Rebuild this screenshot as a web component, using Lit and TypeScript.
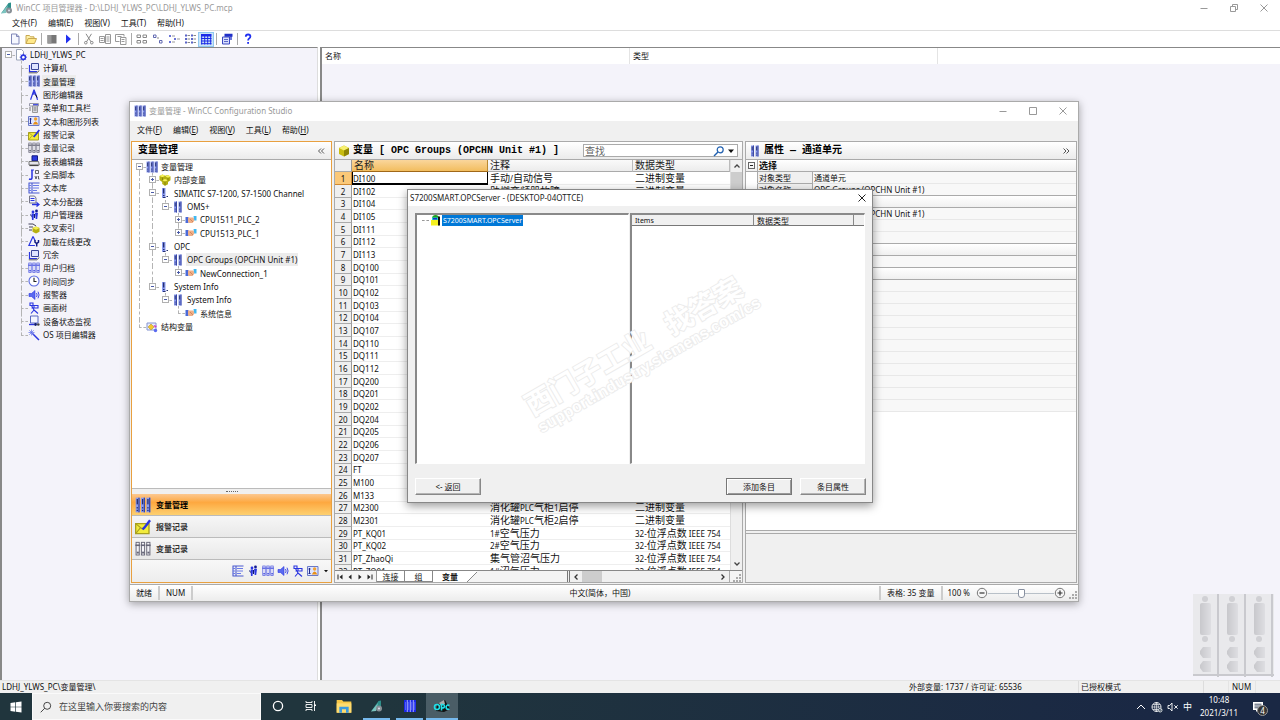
import { LitElement, html, css, svg, nothing } from "lit";
import { customElement, property } from "lit/decorators.js";
import { classMap } from "lit/directives/class-map.js";

const BLUE = "#2a35e0";
const column = (x: number, w = 3) => svg`
  <rect x=${x} y="0.5" width=${w} height="11" fill="#8c9cf0"/>
  <rect x=${x + w - 1} y="0.5" width="1" height="11" fill="#3a48a8"/>
  <rect x=${x + 0.7} y="1.5" width="1" height="4" fill="#26306e"/>
  <rect x=${x + 0.7} y="7.6" width="1" height="1" fill="#26306e"/><rect x=${x + 0.7} y="9.6" width="1" height="1" fill="#26306e"/>`;
const greyColumn = (x: number, c = "#667") => svg`
  <rect x=${x + 0.5} y="1" width="2.4" height="9.5" fill="#f4f4f8" stroke=${c} stroke-width=".7"/>
  <rect x=${x} y="2.6" width="3.4" height="1.2" fill=${c}/><rect x=${x + 1} y="8" width="1.6" height="1.4" fill=${c}/>`;

const ICONS: Record<string, unknown> = {
  project: svg`<path d="M1.5 .5h5l2 2v8.500h-7z" fill="#fff" stroke="#9aa4b8"/><circle cx="8.300" cy="8.200" r="2.200" fill="#cfd8ff" stroke=${BLUE} stroke-width="1.400"/><path d="M8.300 4.600v7.200M4.700 8.200h7.200M5.800 5.700l5 5M10.800 5.700l-5 5" stroke=${BLUE} stroke-width=".9"/><circle cx="8.300" cy="8.200" r="1.200" fill="#fff"/>`,
  computer: svg`<path d="M3.500 1.500h7v6h-7z" fill="#dfe4ff" stroke="#3a4698"/><path d="M1.500 3v6.500h7.500" fill="none" stroke=${BLUE} stroke-width="1.200"/><path d="M.8 10.800h8l2.500-2.300" stroke="#555" fill="none"/>`,
  bars: svg`${column(0.5)}${column(4.5)}${column(8.5)}`,
  bars2: svg`${column(2)}${column(6.5)}`,
  bar1: svg`<rect x="3" y="1" width="3.500" height="10" fill="#8c9cf0"/><rect x="4" y="1.500" width="1.300" height="5" fill="#26306e"/><path d="M4 8.500h1.500M4 10.500h2.500M7.500 9.500h1.500" stroke="#26306e"/>`,
  compass: svg`<path d="M6 .8L2.600 10.800M6 .8l2.500 6.500 1 3.500M6 3v3" stroke=${BLUE} stroke-width="1.200" fill="none"/><path d="M7.500 5.500l1.500 3" stroke="#111"/>`,
  menu: svg`<path d="M1.500 1.500h9v2.500h-9z" fill="#fff" stroke="#99a"/><path d="M5 2.800h5" stroke=${BLUE} stroke-width="1.300"/><path d="M4.500 4h5v6.500h-5z" fill="#dcdce4" stroke="#999"/><path d="M5.500 6h3M5.500 8h3M1 6h2M1 8h2" stroke="#777"/>`,
  person: svg`<path d="M.5 1.500h10.500v9H.5z" fill="#dfe6ff" stroke="#6a79c8"/><circle cx="7.600" cy="4" r="1.700" fill="#f0a030"/><path d="M4.800 9.500q2.800-6 5.600 0z" fill="#e89018"/><path d="M2.500 3v6M1.500 4h2M1.500 8.500h2" stroke="#222a88"/>`,
  mail: svg`<path d="M.5 3.500h10v7.500H.5z" fill="#f2ec3c" stroke="#a8a020"/><path d="M.5 3.500l5 4 5-4M.5 11l3.500-4.300" stroke="#a8a020" fill="none" stroke-width=".8"/><path d="M11.300 1L7 6.500l-1.300 1.300" stroke=${BLUE} stroke-width="1.800"/>`,
  tagLog: svg`${greyColumn(0.3)}${greyColumn(4.3)}${greyColumn(8.3)}`,
  archive: svg`${greyColumn(0.3, "#4a55e0")}${greyColumn(4.3, "#4a55e0")}${greyColumn(8.3, "#4a55e0")}`,
  printer: svg`<path d="M4 .8h5.500v5H4z" fill="#2c3ae0" stroke="#111a80"/><path d="M1 6.500h9.500l.8 3.500H1z" fill="#e4e4ea" stroke="#777"/><path d="M1.500 10.500h9" stroke="#444" stroke-width="1.200"/>`,
  script: svg`<path d="M4 1v8q-.5 2-3 1" stroke=${BLUE} stroke-width="1.500" fill="none"/><path d="M3 1h3" stroke=${BLUE}/><path d="M7.500 1.500h3v3h-3zM7 7l1 3 1-3M10.500 7v3h1" stroke="#444" stroke-width=".8" fill="none"/>`,
  textLib: svg`<path d="M.5 1h11M.5 11h11M1 1v10M4 1v10" stroke="#4a5ad0" stroke-width="1.100"/><path d="M5 3.500h6M5 6h6M5 8.500h4M1 3.500h2M1 6h2M1 8.500h2" stroke="#6a7ae8"/>`,
  textDist: svg`<path d="M1.500 1h5l1.500 2v5h-6.500z" fill="#f0f2ff" stroke="#778"/><path d="M2.500 3.500h4M2.500 5.500h4" stroke=${BLUE}/><path d="M4 9.500h6M8.500 7.500l2.500 2-2.500 2" stroke=${BLUE} stroke-width="1.400" fill="none"/>`,
  users: svg`<circle cx="5" cy="3" r="1.400" fill=${BLUE}/><circle cx="8.500" cy="2" r="1.400" fill="#111a90"/><path d="M3.500 4.500h2.500l-.5 6.500h-1.500zM7 3.700h3l-.8 6.300h-1.500z" fill=${BLUE}/><path d="M2.500 5.500l1 2M6.500 5v4" stroke="#111a70"/>`,
  cross: svg`<path d="M1 2h4M1 5h4M1 8h3M5 2l3 2" stroke="#445" fill="none"/><rect x=".5" y="1" width="3" height="2" fill="#99a"/><path d="M8 4.500l3.500 1.600v3.700L8 11.500 4.500 9.800V6.100z" fill="#b8b010"/><path d="M8 4.500l3.500 1.600L8 7.700 4.500 6.100z" fill="#f2ee50"/>`,
  load: svg`<path d="M5 1.500L.9 10.500h6" stroke=${BLUE} fill="none" stroke-width="1.200"/><path d="M5 1.500l2 4" stroke=${BLUE} stroke-width="1.200"/><path d="M7 5v2.200l1.700 1.300 1.800-1.300V5M8.700 8v3.500" stroke="#111a80" stroke-width="1.500" fill="none"/>`,
  clock: svg`<circle cx="6" cy="6" r="5" fill="#fff" stroke="#5a6ae0" stroke-width="1.100"/><path d="M6 2.800V6.500h2.500" stroke="#222" fill="none" stroke-width="1.100"/>`,
  horn: svg`<path d="M1 4.500h2.500L7 1.500v9L3.500 7.500H1z" fill="#5a6af0" stroke=${BLUE} stroke-width=".6"/><path d="M8.500 4q1.300 2 0 4M10 2.700q2.200 3.300 0 6.600" stroke=${BLUE} fill="none" stroke-width=".9"/>`,
  pictures: svg`<path d="M2 1h3v2.500H2zM6 3.500h4v2.500H6zM3.500 3.500L6 8 3 11.500M6 8l4 3.500M3.500 6h6" stroke=${BLUE} fill="none" stroke-width="1.100"/>`,
  device: svg`<path d="M2.500 1h7.500v7H2.500z" fill="#f4f6ff" stroke="#5a68c0"/><path d="M1 9.500h5" stroke=${BLUE} stroke-width="1.400"/><circle cx="7.500" cy="9.500" r="1.400" fill="#111a70"/><circle cx="10.300" cy="9.500" r="1.300" fill="#444"/>`,
  wand: svg`<path d="M4.500 4.500l6.500 6.500" stroke=${BLUE} stroke-width="1.500"/><path d="M3.500 .5v6M.5 3.500h6M1.300 1.300l4.400 4.400M5.700 1.300L1.300 5.700" stroke="#5a6ae8" stroke-width=".7"/>`,
  cubes: svg`<path d="M3.500 .5l2.700 1.300L9 1l2.500 1.500v3.700L9 8v2.200L6 11.700 3.200 10V8L.5 6V2z" fill="#b4b010"/><path d="M3.500 .5l2.700 1.300-2.700 1.500L.5 2zM9 1l2.500 1.500L9 3.800 6.500 2.500zM6 5l3 1.200L6 7.500 3.200 6.200z" fill="#f6f25a"/><path d="M6 7.500v4M9 3.800v3M3.500 3.400v3" stroke="#6e6c04" stroke-width=".6"/>`,
  cube: svg`<path d="M6 .5l5 2.500v6l-5 2.500L1 9V3z" fill="#c8bc10"/><path d="M6 .5l5 2.500-5 2.500L1 3z" fill="#f7f070"/><path d="M6 5.500L11 3v6l-5 2.500z" fill="#8e8404"/>`,
  hands: svg`<path d="M.5 3h3v6h-3z" fill="#4a6ad8"/><path d="M3 3.500h5.500l1 3L7.500 9H4L3 7.500z" fill="#f0b088"/><path d="M5 5l3 3" stroke="#c07850" stroke-width=".7"/><path d="M8.500 2h3v4.500h-2.200z" fill="#40b8f0"/>`,
  struct: svg`<path d="M1 2h9v7H1z" fill="#e8edff" stroke="#8494d0"/><path d="M2 6l3-3 3 3-3 3z" fill="#f4c830" stroke="#a88820" stroke-width=".5"/><path d="M7.500 4l3.500 1-2 2z" fill="#d040c0"/><circle cx="9.500" cy="9.500" r="1.700" fill="#5a6af0"/>`,
  doc: svg`<path d="M2.500 1h5l2.500 2.500V11H2.500z" fill="#f6f8ff" stroke="#8088b8"/><path d="M7.500 1v2.500H10" fill="none" stroke="#8088b8"/>`,
  folder: svg`<path d="M1 10.500V2.500h3.500l1 1.300H9V5" fill="#fdf0a8" stroke="#c8a850"/><path d="M1 10.500L3.200 5.500h8.300L9.500 10.500z" fill="#ffe98a" stroke="#c8a850"/>`,
  stop: svg`<rect x="1.500" y="2" width="9" height="8.500" fill="#777"/><path d="M1.500 2h4v8.500h-4z" fill="#999"/>`,
  play: svg`<path d="M4 1.500L9 6 4 10.500z" fill="#2030f0"/>`,
  cut: svg`<path d="M3 .8l5 8M8.500 .8l-5 8" stroke="#888" fill="none"/><circle cx="2.800" cy="9.700" r="1.300" fill="none" stroke="#888"/><circle cx="8.800" cy="9.700" r="1.300" fill="none" stroke="#888"/>`,
  copy: svg`<path d="M.5 3.500h5v6h-5zM6.500 1.500h5v9h-5zM1.500 5.500h3M1.500 7.500h3M7.500 4h3M7.500 6h3M7.500 8h3" stroke="#999" fill="none"/>`,
  paste: svg`<path d="M.5 1.500h8.500v2M.5 1.500v7h4M5.500 4.500h5.500v7h-5.500zM6.500 6.500h3M6.500 8.500h3M2.500 3.500h4" stroke="#999" fill="none"/>`,
  large: svg`<path d="M1 2h3.500v2.500H1zM7 2h3.500v2.500H7zM1 7.500h3.500V10H1zM7 7.500h3.500V10H7z" fill="#fff" stroke="#888"/>`,
  small: svg`<path d="M1.500 2h2.500v2.500H1.500zM7.500 7.500H10V10H7.500z" fill="#fff" stroke="#6068b0"/><path d="M5 5h2" stroke="#888"/>`,
  list: svg`<path d="M1 2h2v2H1zM1 8h2v2H1zM6 5h2v2H6z" fill="#6a74d8"/><path d="M4 3h3M4 9h3M9 6h3" stroke="#999"/>`,
  detail: svg`<path d="M1 1.500h2v2H1zM1 5h2v2H1zM1 8.500h2v2H1zM7 1.500h2v2H7zM7 5h2v2H7zM7 8.500h2v2H7z" fill="#5a64c8"/><path d="M3.500 2.500h2.500M3.500 6h2.500M3.500 9.500h2.500M9.500 2.500h2.500M9.500 6h2.500M9.500 9.500h2.500" stroke="#888"/>`,
  table: svg`<path d="M1 1h10.500v2.500H1z" fill="#1a2ae8"/><path d="M1 5.500h10.500M1 8h10.500M1 10.700h10.500" stroke="#1a2ae8" stroke-width="1"/><path d="M1.700 3v8.500M4.700 3v8.500M7.700 3v8.500M10.700 3v8.500" stroke="#1a2ae8"/>`,
  props: svg`<path d="M1.500 4h7v7h-7z" fill="#d8defc" stroke="#3a48c0"/><path d="M3.500 1.500h8M3.500 3h8M10 3v4" fill="none" stroke="#2030c8" stroke-width="1.300"/><path d="M3 6.500h4M3 8.500h4" stroke="#5a68c8"/>`,
  help: svg`<path d="M3.800 3.800q0-2.300 2.300-2.300t2.300 2q0 1.300-1.300 2-1 .6-1 2" stroke="#2030f0" stroke-width="1.800" fill="none"/><rect x="5.200" y="9" width="1.800" height="1.800" fill="#2030f0"/>`,
  brand: svg`<path d="M0 11.500L7.500 1 10 .5v6z" fill="#2d8f8a"/><path d="M0 11.500L7 3l-2 8z" fill="#7cc4c0"/><circle cx="8" cy="8.500" r="3" fill="#889096"/><circle cx="8" cy="8.500" r="1" fill="#dde"/>`,
  opcNode: svg`<path d="M3 4.500q0-3.500 3.500-3.500t3.500 3.500" fill="#20a020"/><path d="M3 3.500h6v2.500H3z" fill="#20d8d8"/><path d="M2 6h8v5.500H2z" fill="#f4f020"/><path d="M9 2.500h2v9H9z" fill="#111"/><path d="M4 4h4v1.500H4z" fill="#2030c0"/>`,
  minus: svg`<path d="M2.500 6.500h7" stroke="currentColor"/>`,
  square: svg`<path d="M2.500 2.500h7v7h-7z" fill="none" stroke="currentColor"/>`,
  restore: svg`<path d="M2.500 4.500h5v5h-5zM4.500 4.500v-2h5v5H7.500" fill="none" stroke="currentColor"/>`,
  close: svg`<path d="M2.500 2.500l7 7M9.500 2.500l-7 7" stroke="currentColor"/>`,
  glass: svg`<circle cx="7.200" cy="4.800" r="3" fill="none" stroke="currentColor" stroke-width="1.200"/><path d="M5 7l-4 4" stroke="currentColor" stroke-width="1.500"/>`,
  lens: svg`<circle cx="7.200" cy="4.800" r="3.500" fill="none" stroke="currentColor" stroke-width=".9"/><path d="M4.700 7.300l-4 4" stroke="currentColor" stroke-width=".9"/>`,
  up: svg`<path d="M3.500 7.500L6 5l2.500 2.500" fill="none" stroke="currentColor" stroke-width="1.300"/>`,
  chevron: svg`<path d="M2 8l4-4 4 4" fill="none" stroke="currentColor"/>`,
  down: svg`<path d="M3.500 4.500L6 7l2.500-2.500" fill="none" stroke="currentColor" stroke-width="1.300"/>`,
  left: svg`<path d="M7.500 3.500L5 6l2.500 2.500" fill="none" stroke="currentColor" stroke-width="1.300"/>`,
  right: svg`<path d="M4.500 3.500L7 6 4.500 8.500" fill="none" stroke="currentColor" stroke-width="1.300"/>`,
  caret: svg`<path d="M3 4.500h6L6 8z" fill="currentColor"/>`,
  dleft: svg`<path d="M6 3.500L3.500 6 6 8.500M9 3.500L6.500 6 9 8.500" fill="none" stroke="currentColor"/>`,
  dright: svg`<path d="M3.500 3.500L6 6 3.500 8.500M6.500 3.500L9 6 6.500 8.500" fill="none" stroke="currentColor"/>`,
  first: svg`<path d="M4 3.500v5" stroke="currentColor"/><path d="M8.500 3.500v5L5.500 6z" fill="currentColor"/>`,
  prev: svg`<path d="M7.500 3.500v5L4.500 6z" fill="currentColor"/>`,
  next: svg`<path d="M4.500 3.500v5L7.500 6z" fill="currentColor"/>`,
  last: svg`<path d="M8 3.500v5" stroke="currentColor"/><path d="M3.500 3.500v5L6.500 6z" fill="currentColor"/>`,
  zoomOut: svg`<circle cx="6" cy="6" r="4.700" fill="#f6f6f6" stroke="#777"/><path d="M3.500 6h5" stroke="#333" stroke-width="1.200"/>`,
  zoomIn: svg`<circle cx="6" cy="6" r="4.700" fill="#f6f6f6" stroke="#777"/><path d="M3.500 6h5M6 3.500v5" stroke="#333" stroke-width="1.200"/>`,
  grip: svg`<path d="M9 3h2v2H9zM6 6h2v2H6zM9 6h2v2H9zM3 9h2v2H3zM6 9h2v2H6zM9 9h2v2H9z" fill="#aaa"/>`,
  windows: svg`<path d="M.5 2l4.800-.7V5.700H.5zM6 1.200L11.500.4V5.700H6zM.5 6.300h4.800v4.400L.5 10zM6 6.300h5.500v5.300L6 10.800z" fill="#fff"/>`,
  cortana: svg`<circle cx="6" cy="6" r="4.600" fill="none" stroke="#fff" stroke-width="1.300"/>`,
  taskview: svg`<path d="M1 1v1.500h6V1M1 11V9.500h6V11M1 4.500h6v3H1zM9.500 1v10" stroke="#fff" fill="none" stroke-width=".9"/><path d="M9 4.500h2v1.500H9z" fill="#fff"/>`,
  explorer: svg`<path d="M.5 1.500h4l1 1.200h6V11H.5z" fill="#f8c848"/><path d="M.5 4h11v7H.5z" fill="#ffdc70"/><path d="M2.500 11V6.500h7V11h-2V8.500h-3V11z" fill="#3c9ae0"/>`,
  studio: svg`<rect width="12" height="12" fill="#1c28e8"/><path d="M3.300 0v12M6.300 0v12M9.300 0v12" stroke="#dfe2ff" stroke-width=".7"/><path d="M1.500 2v8M4.700 2v8M7.700 2v8M10.700 2v8" stroke="#6a76ff" stroke-width=".7"/>`,
  globe: svg`<circle cx="5.500" cy="6" r="4.500" fill="none" stroke="#fff" stroke-width=".9"/><path d="M1 6h9M5.500 1.500v9M2 3.500h7M2 8.500h7M5.500 1.500q-4 4.500 0 9M5.500 1.500q4 4.500 0 9" stroke="#fff" fill="none" stroke-width=".6"/><circle cx="9.200" cy="9.200" r="2.400" fill="#1c2f45"/><circle cx="9.200" cy="9.200" r="1.800" fill="none" stroke="#fff" stroke-width=".8"/><path d="M8 10.500l2.500-2.500" stroke="#fff" stroke-width=".7"/>`,
  mute: svg`<path d="M1 4.500h1.700L5 2v8L2.700 7.500H1z" fill="none" stroke="#fff" stroke-width=".9"/><path d="M7.300 4.300l3.400 3.400M10.700 4.300L7.300 7.700" stroke="#fff" stroke-width=".9"/>`,
  note: svg`<path d="M1 1h10v8H6L4 11V9H1z" fill="#fff"/><path d="M2.500 3.200h7M2.500 5h7M2.500 6.800h5" stroke="#1a2844" stroke-width=".8"/>`,
};

const icon = (name: string, cls = "") =>
  html`<svg class="icon ${cls}" viewBox="0 0 12 12" aria-hidden="true">${ICONS[name]}</svg>`;

/* Ideographs are set larger than the Latin text beside them. */
const mixed = (text: string) =>
  text.split(/([\u3400-\u9fff]+)/).map((part, i) => (i % 2 ? html`<span class="han">${part}</span>` : part));

const base = css`
  * { box-sizing: border-box; }
  .icon { width: 12px; height: 12px; flex: none; display: block; }
  .wide { width: 16px; height: 16px; }
  .tiny { width: 8px; height: 8px; }
  button { font: inherit; color: inherit; background: none; border: 0; padding: 0; margin: 0; display: flex; align-items: center; justify-content: center; white-space: nowrap; }
`;

interface Node {
  label: string;
  icon: string;
  guides?: string;
  box?: "+" | "-";
  up?: boolean;
  down?: boolean;
  selected?: boolean;
}

@customElement("tree-list")
class TreeList extends LitElement {
  @property({ attribute: false }) nodes: Node[] = [];

  static styles = [base, css`
    :host { display: block; }
    .tree { list-style: none; margin: 0; padding: 0; }
    .row { display: flex; align-items: center; height: 13px; }
    .row:nth-child(3n) { height: 14px; }
    .guide { width: 13px; align-self: stretch; display: flex; padding-left: 4px; flex: none; }
    .guide.line::before { content: ""; border-left: 1px dashed #b4b4b4; }
    .joint { width: 11px; align-self: stretch; flex: none; display: grid; grid-template: 1fr 1fr / 4px 1fr; position: relative; }
    .up { grid-area: 1 / 2; border-left: 1px dashed #b4b4b4; }
    .down { grid-area: 2 / 2; border-left: 1px dashed #b4b4b4; }
    .stub { grid-area: 2 / 2; border-top: 1px dashed #b4b4b4; }
    .box { position: absolute; left: 1px; top: 3px; width: 7px; height: 7px; border: 1px solid #b0b0b0; background: #fff; }
    .box svg { width: 5px; height: 5px; display: block; flex: none; }
    .label { margin-left: 2px; padding: 0 1px; line-height: 13px; white-space: nowrap; }
    .selected { background: #ececec; }
  `];

  render() {
    return html`<ul class="tree" role="tree">
      ${this.nodes.map((n) => html`<li class="row" role="treeitem">
        ${[...(n.guides ?? "")].map((g) => html`<span class=${classMap({ guide: true, line: g === "|" })}></span>`)}
        <span class="joint">
          ${n.up ? html`<span class="up"></span>` : nothing}
          ${n.down ? html`<span class="down"></span>` : nothing}
          <span class="stub"></span>
          ${n.box ? html`<button class="box" aria-label=${n.box === "+" ? "展开" : "折叠"}><svg viewBox="0 0 5 5"><path d=${n.box === "+" ? "M1 2.5h3M2.5 1v3" : "M1 2.5h3"} stroke="#4a5aa8"/></svg></button>` : nothing}
        </span>
        ${icon(n.icon)}
        <span class=${classMap({ label: true, selected: !!n.selected })}>${n.label}</span>
      </li>`)}
    </ul>`;
  }
}

const PROJECT_ITEMS: [string, string][] = [
  ["计算机", "computer"], ["变量管理", "bars"], ["图形编辑器", "compass"], ["菜单和工具栏", "menu"],
  ["文本和图形列表", "person"], ["报警记录", "mail"], ["变量记录", "tagLog"], ["报表编辑器", "printer"],
  ["全局脚本", "script"], ["文本库", "textLib"], ["文本分配器", "textDist"], ["用户管理器", "users"],
  ["交叉索引", "cross"], ["加载在线更改", "load"], ["冗余", "computer"], ["用户归档", "archive"],
  ["时间同步", "clock"], ["报警器", "horn"], ["画面树", "pictures"], ["设备状态监视", "device"], ["OS 项目编辑器", "wand"],
];

const PROJECT: Node[] = [
  { label: "LDHJ_YLWS_PC", icon: "project", box: "-" },
  ...PROJECT_ITEMS.map(([label, name], i): Node => ({
    label, icon: name, guides: " ", up: true, down: i < PROJECT_ITEMS.length - 1, selected: label === "变量管理",
  })),
];

const TAGS: Node[] = [
  { label: "变量管理", icon: "bars", box: "-", down: true },
  { label: "内部变量", icon: "cubes", guides: "|", box: "+", up: true, down: true },
  { label: "SIMATIC S7-1200, S7-1500 Channel", icon: "bar1", guides: "|", box: "-", up: true, down: true },
  { label: "OMS+", icon: "bars2", guides: "||", box: "-", up: true },
  { label: "CPU1511_PLC_2", icon: "hands", guides: "|| ", box: "+", up: true, down: true },
  { label: "CPU1513_PLC_1", icon: "hands", guides: "|| ", box: "+", up: true },
  { label: "OPC", icon: "bar1", guides: "|", box: "-", up: true, down: true },
  { label: "OPC Groups (OPCHN Unit #1)", icon: "bars2", guides: "||", box: "-", up: true, selected: true },
  { label: "NewConnection_1", icon: "hands", guides: "|| ", box: "+", up: true },
  { label: "System Info", icon: "bar1", guides: "|", box: "-", up: true },
  { label: "System Info", icon: "bars2", guides: "| ", box: "-", up: true },
  { label: "系统信息", icon: "hands", guides: "|  ", up: true },
  { label: "结构变量", icon: "struct", up: true },
];

const NAMES = "DI100 DI102 DI104 DI105 DI111 DI112 DI113 DQ100 DQ101 DQ102 DQ103 DQ104 DQ107 DQ110 DQ111 DQ112 DQ200 DQ201 DQ202 DQ204 DQ205 DQ206 DQ207 FT M100 M133 M2300 M2301 PT_KQ01 PT_KQ02 PT_ZhaoQi PT_ZQ01".split(" ");
const NOTES: Record<number, [string, string]> = {
  1: ["手动/自动信号", "二进制变量"],
  2: ["助燃变频器故障", "二进制变量"],
  27: ["消化罐PLC气柜1启停", "二进制变量"],
  28: ["消化罐PLC气柜2启停", "二进制变量"],
  29: ["1#空气压力", "32-位浮点数 IEEE 754"],
  30: ["2#空气压力", "32-位浮点数 IEEE 754"],
  31: ["集气管沼气压力", "32-位浮点数 IEEE 754"],
  32: ["1#沼气压力", "32-位浮点数 IEEE 754"],
};

const PROPS: [string, string, string][] = [
  ["head", "选择", ""], ["", "对象类型", "通道单元"], ["", "对象名称", "OPC Groups (OPCHN Unit #1)"],
  ["head", "", ""], ["", "", "OPC Groups (OPCHN Unit #1)"], ["", "", ""], ["", "", ""],
  ["head", "", ""], ["", "", ""], ["head", "", ""],
  ...Array.from({ length: 11 }, (): [string, string, string] => ["", "", ""]),
];

@customElement("opc-dialog")
class OpcDialog extends LitElement {
  static styles = [base, css`
    :host { display: flex; flex-direction: column; background: #f0f0f0; border: 1px solid #888; box-shadow: 0 3px 9px rgba(0, 0, 0, .4); }
    .title { display: flex; align-items: center; justify-content: space-between; height: 16px; background: #fff; padding: 0 4px 1px 2px; color: #222; }
    .lists { flex: 1; display: flex; gap: 1px; padding: 7px 7px 0; position: relative; }
    .pane { background: #fff; border: 1px solid #fff; border-top: 2px solid #8a8a8a; border-left: 2px solid #888; }
    .servers { width: 214px; }
    .items { flex: 1; }
    .node { display: flex; align-items: center; height: 10px; padding-left: 5px; font-size: 7px; }
    .dash { width: 7px; border-top: 1px dashed #999; }
    .picked { background: #0078d7; color: #fff; line-height: 11px; padding: 0 1px; margin-left: 1px; }
    table { width: 100%; border-collapse: separate; border-spacing: 0; table-layout: fixed; }
    th { height: 11px; padding: 0 3px; font-weight: normal; font-size: 7px; line-height: 9px; text-align: left; background: #f0f0f0; border-bottom: 1px solid #777; border-right: 1px solid #888; }
    th.kind { width: 100px; font-size: 8px; }
    th.rest { width: 10px; border-right: 0; padding: 0; }
    .actions { display: flex; gap: 8px; padding: 14px 6px 7px 7px; }
    .actions button { width: 66px; height: 17px; background: #f0f0f0; border: 1px solid; border-color: #fff #888 #888 #fff; box-shadow: inset -1px -1px #b4b4b4; }
    .actions .default { border-color: #777; box-shadow: inset 1px 1px #fff, inset -1px -1px #999; margin-left: auto; }
    .mark { position: absolute; left: 107px; top: 122px; transform: rotate(-30deg); white-space: nowrap; color: #fff; -webkit-text-stroke: 2px #ececec; paint-order: stroke; pointer-events: none; font-weight: bold; }
    .mark .cn { display: block; font-size: 28px; line-height: 29px; }
    .mark .url { display: block; font-family: "Liberation Sans", sans-serif; font-size: 16px; line-height: 20px; }
  `];

  render() {
    return html`
      <div class="title"><span>S7200SMART.OPCServer - (DESKTOP-04OTTCE)</span><button aria-label="关闭">${icon("close")}</button></div>
      <div class="lists">
        <div class="pane servers"><div class="node"><span class="dash"></span>${icon("opcNode")}<span class="picked">S7200SMART.OPCServer</span></div></div>
        <div class="pane items"><table><thead><tr><th>Items</th><th class="kind">数据类型</th><th class="rest"></th></tr></thead></table></div>
        <div class="mark"><span class="cn">西门子工业&ensp;&nbsp;找答案</span><span class="url">support.industry.siemens.com/cs</span></div>
      </div>
      <div class="actions"><button>&lt;- 返回</button><button class="default">添加条目</button><button>条目属性</button></div>`;
  }
}

@customElement("config-studio")
class ConfigStudio extends LitElement {
  static styles = [base, css`
    :host { display: flex; flex-direction: column; background: #f0f0f0; border: 1px solid #aaa; box-shadow: 0 2px 8px rgba(0, 0, 0, .35); }
    .title { display: flex; align-items: center; gap: 3px; height: 19px; background: #fff; color: #999; padding: 0 9px 1px 4px; }
    .controls { display: flex; gap: 18px; margin-left: auto; }
    .menu { display: flex; gap: 11px; height: 20px; padding: 0 0 2px 7px; align-items: center; }
    .panels { flex: 1; min-height: 0; display: flex; gap: 2px; padding: 0 1px; }
    .panel { display: flex; flex-direction: column; border: 1px solid #aaa; min-height: 0; overflow: hidden; }
    .nav { width: 201px; border-color: #e8a040; background: #f0f0f0; }
    .sheet { width: 409px; background: #fff; }
    .props { flex: 1; min-width: 0; background: #fff; }
    .caption { display: flex; align-items: center; gap: 3px; height: 18px; flex: none; padding: 0 4px 0 3px; border-bottom: 1px solid #aaa; background: linear-gradient(#fff, #ebebeb); font: bold 10px/16px "Liberation Mono", "Noto Sans CJK SC", monospace; color: #000; white-space: pre; }
    .caption .end { margin-left: auto; color: #555; }
    .nav .caption { padding-left: 6px; }
    .tree { flex: 1; background: #fff; padding: 0 0 0 3px; }
    .splitter { height: 6px; border-top: 1px solid #bbb; display: flex; justify-content: center; align-items: center; }
    .splitter::before { content: ""; width: 12px; border-top: 1px dotted #666; }
    .mode { height: 22px; justify-content: flex-start; gap: 5px; padding-left: 3px; font-weight: bold; border-bottom: 1px solid #bbb; background: linear-gradient(#f6f6f6, #e8e8e8); color: #333; }
    .mode.on { background: linear-gradient(#fcc890, #fda840 40%, #fdd070); color: #000; }
    .minis { display: flex; justify-content: flex-end; gap: 3px; height: 22px; align-items: center; background: linear-gradient(#f8f8f8, #ededed); padding-right: 1px; }
    .search { margin-left: auto; display: flex; align-items: center; width: 155px; height: 13px; background: #fff; border: 1px solid #aaa; color: #111; }
    .search input { flex: 1; min-width: 0; border: 0; padding: 0 1px; outline: 0; background: none; font: 10px/11px "Noto Sans CJK SC", sans-serif; color: #666; }
    .search input::placeholder { color: #666; opacity: 1; }
    .find { color: #2060b0; }
    .grid { flex: 1; min-height: 0; display: flex; overflow: hidden; }
    .clip { flex: 1; min-width: 0; overflow: hidden; }
    table { width: 100%; border-collapse: separate; border-spacing: 0; table-layout: fixed; }
    .han { font-size: 10px; }
    .tags th, .tags td { height: 13px; padding: 0 0 0 2px; text-align: left; font-weight: normal; line-height: 11px; white-space: nowrap; border-bottom: 1px solid #eee; }
    .tags td.name { padding-left: 1px; }
    .tags tbody tr:nth-child(3n) td, .tags tbody tr:nth-child(3n) th { height: 12px; }
    .tags thead th { height: 12px; border-bottom: 1px solid #aaa; border-right: 1px solid #bbb; background: linear-gradient(#fafafa, #ececec); font-size: 10px; color: #222; }
    .tags thead .lit { background: linear-gradient(#fad69c, #f2bd5e); border-right-color: #b88830; border-bottom-color: #a06818; }
    .tags .num { width: 17px; padding: 0; text-align: center; background: #efefef; border-right: 1px solid #999; border-bottom: 1px solid #aaa; }
    .tags tbody tr:first-child .num { background: #fbc878; border-color: #d08830; }
    .name { width: 136px; }
    .note { width: 145px; }
    .tags tbody tr:first-child .name { box-shadow: inset 0 -1px #000, inset -1px 0 #000, inset 1px 0 #000; border-bottom-color: #000; }
    .vbar { width: 12px; display: flex; flex-direction: column; background: #f0f0f0; border-left: 1px solid #ddd; color: #444; }
    .thumb { background: #cdcdcd; height: 240px; margin-bottom: auto; }
    .tabs { display: flex; align-items: stretch; height: 12px; flex: none; border-top: 1px solid #888; background: #f4f4f4; }
    .arrows { display: flex; width: 42px; border-right: 1px solid #999; color: #222; }
    .arrows button { width: 10px; }
    .tab { width: 28px; line-height: 11px; background: #fff; border-right: 1px solid #888; border-bottom: 1px solid #888; }
    .tab.current { font-weight: bold; width: 34px; border: 0; }
    .slant { width: 10px; height: 11px; background: linear-gradient(135deg, #fff 48%, #888 49%, #888 54%, #f4f4f4 55%); }
    .hbar { margin-left: auto; display: flex; width: 163px; background: #f0f0f0; border-left: 3px double #777; border-right: 1px solid #aaa; color: #333; }
    .hthumb { width: 20px; background: #cdcdcd; margin: 0 auto 0 0; }
    .pairs td, .pairs th { height: 12px; padding: 0 1px; line-height: 11px; text-align: left; white-space: nowrap; background: #f8f8f8; border-bottom: 1px solid #e8e8e8; font-weight: normal; }
    .pairs .gut { width: 12px; background: #fff; border-right: 1px solid #aaa; padding: 0; border-bottom-color: #fff; }
    .pairs .key { width: 55px; background: #f0f0f0; border-right: 1px solid #aaa; border-bottom-color: #aaa; }
    .pairs .head td, .pairs .head th { background: linear-gradient(#fff, #f0f0f0); border-bottom-color: #aaa; }
    .pairs .head th { font-weight: bold; font-size: 9px; }
    .pairs tr:has(+ .head) td { border-bottom-color: #aaa; }
    .fold { width: 7px; height: 7px; border: 1px solid #666; margin: 0 auto; }
    .fold::before { content: ""; width: 3px; border-top: 1px solid #222; }
    .about { height: 52px; margin-top: auto; background: #f0f0f0; border-top: 4px double #aaa; }
    .status { display: grid; grid-template-columns: 1fr auto 1fr; align-items: center; height: 17px; margin-top: 1px; border-top: 1px solid #aaa; background: linear-gradient(#fff, #ececec); color: #111; }
    .side { display: flex; align-items: center; }
    .right { justify-content: flex-end; }
    .cell { border-right: 2px solid #ccc; height: 14px; line-height: 14px; padding: 0 6px; }
    .lang { padding-right: 8px; }
    .count { border-left: 2px solid #ccc; }
    .zoom { display: flex; align-items: center; padding-left: 5px; gap: 6px; }
    .slide { display: flex; align-items: center; }
    input[type="range"] { appearance: none; width: 66px; height: 11px; margin: 0; background: linear-gradient(#b8c0c8, #b8c0c8) center / 100% 1px no-repeat; }
    input[type="range"]::-webkit-slider-thumb { appearance: none; width: 7px; height: 9px; border: 1px solid #8890a0; border-radius: 1px 1px 3px 3px; background: #fff; }
    .size { align-self: flex-end; }
    u { text-underline-offset: 1px; }
  `];

  render() {
    const menu: [string, string][] = [["文件", "F"], ["编辑", "E"], ["视图", "V"], ["工具", "L"], ["帮助", "H"]];
    return html`
      <div class="title">${icon("bars")}<span>变量管理 - WinCC Configuration Studio</span>
        <div class="controls"><button aria-label="最小化">${icon("minus")}</button><button aria-label="最大化">${icon("square")}</button><button aria-label="关闭">${icon("close")}</button></div>
      </div>
      <nav class="menu">${menu.map(([t, k]) => html`<button>${t}(<u>${k}</u>)</button>`)}</nav>
      <div class="panels">
        <section class="panel nav">
          <header class="caption"><span>变量管理</span><button class="end" aria-label="收起">${icon("dleft")}</button></header>
          <div class="tree"><tree-list .nodes=${TAGS}></tree-list></div>
          <div class="splitter"></div>
          <button class="mode on">${icon("bars", "wide")}变量管理</button>
          <button class="mode">${icon("mail", "wide")}报警记录</button>
          <button class="mode">${icon("tagLog", "wide")}变量记录</button>
          <div class="minis">${["textLib", "users", "archive", "horn", "pictures", "person"].map((n) => html`<button aria-label=${n}>${icon(n)}</button>`)}<button aria-label="更多">${icon("caret", "tiny")}</button></div>
        </section>
        <section class="panel sheet">
          <header class="caption">${icon("cube")}<span>变量 [ OPC Groups (OPCHN Unit #1) ]</span>
            <label class="search"><input type="text" placeholder="查找" aria-label="查找"><span class="find">${icon("glass")}</span>${icon("caret")}</label>
          </header>
          <div class="grid">
            <div class="clip"><table class="tags">
              <thead><tr><th class="num"></th><th class="name lit">名称</th><th class="note">注释</th><th>数据类型</th></tr></thead>
              <tbody>${NAMES.map((name, i) => html`<tr><th class="num">${i + 1}</th><td class="name">${name}</td><td class="note">${mixed(NOTES[i + 1]?.[0] ?? "")}</td><td>${mixed(NOTES[i + 1]?.[1] ?? "")}</td></tr>`)}</tbody>
            </table></div>
            <div class="vbar"><button aria-label="向上">${icon("up")}</button><span class="thumb"></span><button aria-label="向下">${icon("down")}</button></div>
          </div>
          <div class="tabs">
            <div class="arrows">${["first", "prev", "next", "last"].map((n) => html`<button aria-label=${n}>${icon(n)}</button>`)}</div>
            <button class="tab">连接</button><button class="tab">组</button><button class="tab current">变量</button><span class="slant"></span>
            <div class="hbar"><button aria-label="向左">${icon("left")}</button><span class="hthumb"></span><button aria-label="向右">${icon("right")}</button></div>
            ${icon("grip")}
          </div>
        </section>
        <section class="panel props">
          <header class="caption">${icon("bars2")}<span>属性 — 通道单元</span><button class="end" aria-label="展开">${icon("dright")}</button></header>
          <table class="pairs"><colgroup><col class="gut"><col class="key"><col></colgroup><tbody>${PROPS.map(([kind, key, value], i) => kind
            ? html`<tr class="head"><td class="gut">${i === 0 ? html`<button class="fold" aria-label="折叠"></button>` : nothing}</td><th colspan="2">${key}</th></tr>`
            : html`<tr><td class="gut"></td><td class="key">${key}</td><td>${value}</td></tr>`)}</tbody></table>
          <div class="about"></div>
        </section>
      </div>
      <footer class="status">
        <div class="side"><span class="cell">就绪</span><span class="cell">NUM</span></div>
        <span class="lang">中文(简体，中国)</span>
        <div class="side right">
          <span class="cell count">表格: 35 变量</span>
          <div class="zoom"><span>100 %</span><div class="slide"><button aria-label="缩小">${icon("zoomOut")}</button><input type="range" aria-label="缩放" min="0" max="100" value="50"><button aria-label="放大">${icon("zoomIn")}</button></div></div>
          ${icon("grip", "size")}
        </div>
      </footer>`;
  }
}

@customElement("app-root")
class AppRoot extends LitElement {
  static styles = [base, css`
    :host { display: flex; flex-direction: column; height: 100vh; position: relative; overflow: hidden; background: #fff; color: #111; font: 8px/12px "Noto Sans", "Noto Sans CJK SC", sans-serif; }
    .title { display: flex; align-items: center; gap: 3px; height: 16px; padding: 0 10px 1px 1px; color: #999; }
    .controls { display: flex; gap: 18px; margin-left: auto; }
    .menu { display: flex; gap: 11px; height: 15px; padding: 0 0 1px 12px; border-bottom: 1px solid #ddd; align-items: center; }
    .tools { display: flex; align-items: center; height: 16px; padding-left: 7px; }
    .tools button { width: 16px; height: 15px; }
    .tools .on { background: #cce4f7; border: 1px solid #90c8f0; }
    .sep { width: 1px; height: 12px; background: #aaa; margin: 0 2px; }
    .body { flex: 1; display: flex; min-height: 0; }
    .project { width: 318px; margin-right: 2px; background: #f4f3fa; border-top: 1px solid #888; border-left: 2px solid #888; border-right: 1px solid #ddd; padding: 0 0 0 2px; }
    .detail { flex: 1; position: relative; background: #f4f3fa; border-top: 1px solid #888; border-left: 2px solid #888; }
    .cols { width: 100%; border-collapse: separate; border-spacing: 0; table-layout: fixed; background: #fff; }
    .cols th { height: 16px; padding: 0 3px; text-align: left; font-weight: normal; border-right: 1px solid #e4e4e4; width: 308px; }
    .cols th:last-child { width: auto; border: 0; }
    .rack { position: absolute; right: 4px; bottom: 3px; width: 83px; height: 83px; }
    .status { display: flex; height: 13px; background: #f0f0f0; border-top: 1px solid #e4e4e4; line-height: 12px; }
    .path { flex: 1; padding-left: 2px; }
    .license { width: 170px; border-right: 1px solid #ddd; }
    .mode { width: 125px; padding-left: 2px; border-right: 1px solid #ddd; }
    .blank { width: 25px; border-right: 1px solid #e4e4e4; }
    .num { width: 27px; padding-left: 3px; border-right: 1px solid #e4e4e4; }
    .tail { width: 24px; }
    .taskbar { display: flex; height: 27px; background: linear-gradient(90deg, #20353d 30%, #1a2844 90%); color: #fff; }
    .start { width: 32px; }
    .ask { display: flex; align-items: center; gap: 7px; width: 229px; padding-left: 7px; background: #f0f0f0; border: 1px solid #fafafa; color: #333; }
    .ask input { flex: 1; border: 0; padding: 0; background: none; outline: 0; font: 9px/14px "Noto Sans CJK SC", sans-serif; }
    .ask input::placeholder { color: #444; opacity: 1; }
    .apps { display: flex; margin-right: auto; }
    .apps button { width: 33px; border-bottom: 2px solid transparent; }
    .apps .run { border-bottom-color: #76b9ed; width: 27px; margin: 0 3px; }
    .apps .front { border-bottom-color: #76b9ed; background: #4a5d66; width: 32px; }
    .opc { width: 18px; height: 12px; }
    .tray { display: flex; align-items: center; gap: 4px; }
    .ime { font-size: 9px; }
    .clock { width: 46px; text-align: center; line-height: 13px; display: block; padding-bottom: 2px; }
    .bell { position: relative; width: 24px; margin-right: 10px; }
    .badge { position: absolute; left: 11px; top: 4px; width: 11px; height: 11px; border-radius: 6px; background: #333; border: 1px solid #999; line-height: 9px; text-align: center; }
    .studio { position: absolute; left: 129px; top: 101px; right: 201px; bottom: 118px; }
    .dialog { position: absolute; left: 407px; top: 189px; width: 466px; height: 314px; }
  `];

  render() {
    const tools = ["doc", "folder", "", "stop", "play", "", "cut", "copy", "paste", "", "large", "small", "list", "detail", "table", "", "props", "", "help"];
    const card = (x: number) => svg`<g transform="translate(${x} 0)">
      <rect width="27" height="80" fill="#e9e9ec"/><rect x="24" width="2" height="83" fill="#c9c9ce"/>
      <circle cx="12" cy="5" r="3" fill="#d0d0d4"/><rect x="7" y="9" width="11" height="32" rx="2" fill="url(#slot)"/><circle cx="12" cy="45" r="3" fill="#d0d0d4"/>
      <path d="M7 57l3-4h8v11h-8l-3-4zM7 71l3-4h8v11h-8l-3-4z" fill="url(#slot)"/></g>`;
    return html`
      <header class="title">${icon("brand")}<span>WinCC 项目管理器 - D:\\LDHJ_YLWS_PC\\LDHJ_YLWS_PC.mcp</span>
        <div class="controls"><button aria-label="最小化">${icon("minus")}</button><button aria-label="还原">${icon("restore")}</button><button aria-label="关闭">${icon("close")}</button></div>
      </header>
      <nav class="menu">${["文件(F)", "编辑(E)", "视图(V)", "工具(T)", "帮助(H)"].map((t) => html`<button>${t}</button>`)}</nav>
      <div class="tools">${tools.map((t) => t ? html`<button class=${classMap({ on: t === "table" })} aria-label=${t}>${icon(t)}</button>` : html`<span class="sep"></span>`)}</div>
      <main class="body">
        <section class="project"><tree-list .nodes=${PROJECT}></tree-list></section>
        <section class="detail">
          <table class="cols"><thead><tr><th>名称</th><th>类型</th><th></th></tr></thead></table>
          <svg class="rack" viewBox="0 0 83 83" aria-hidden="true"><defs><linearGradient id="slot"><stop offset="0" stop-color="#c8c8cc"/><stop offset="1" stop-color="#dedee2"/></linearGradient></defs>
            ${card(0)}${card(27)}${card(54)}<rect y="80" width="81" height="2" fill="#c9c9ce"/></svg>
        </section>
      </main>
      <footer class="status"><span class="path">LDHJ_YLWS_PC\\变量管理\\</span><span class="license">外部变量: 1737 / 许可证: 65536</span><span class="mode">已授权模式</span><span class="blank"></span><span class="num">NUM</span><span class="tail"></span></footer>
      <div class="taskbar">
        <button class="start" aria-label="开始">${icon("windows")}</button>
        <label class="ask">${icon("lens")}<input type="text" placeholder="在这里输入你要搜索的内容" aria-label="搜索"></label>
        <div class="apps">
          <button aria-label="Cortana">${icon("cortana")}</button><button aria-label="任务视图">${icon("taskview")}</button>
          <button aria-label="文件资源管理器">${icon("explorer", "wide")}</button><button class="run" aria-label="WinCC">${icon("brand")}</button>
          <button class="run" aria-label="Configuration Studio">${icon("studio")}</button>
          <button class="front" aria-label="OPC"><svg class="opc" viewBox="0 0 18 12"><path d="M4 5l8-5 2 4 3 5-6 3-8-1z" fill="#111"/><path d="M6 3l5-3 1 4-4 2z" fill="#aaa"/><circle cx="4" cy="7" r="2.500" fill="none" stroke="#20e0e8" stroke-width="1.600"/><path d="M8.500 10.500v-6h1.500q1.500 0 1.500 1.700T9 8M16.500 5.500q-3-1.500-3.300 1.500t3.300 2" fill="none" stroke="#20e0e8" stroke-width="1.600"/></svg></button>
        </div>
        <div class="tray">
          <button aria-label="隐藏的图标">${icon("chevron")}</button>${icon("globe")}${icon("mute")}<span class="ime">中</span>
          <time class="clock">10:48<br>2021/3/11</time>
          <button class="bell" aria-label="通知">${icon("note")}<span class="badge">4</span></button>
        </div>
      </div>
      <config-studio class="studio"></config-studio>
      <opc-dialog class="dialog" role="dialog"></opc-dialog>`;
  }
}
